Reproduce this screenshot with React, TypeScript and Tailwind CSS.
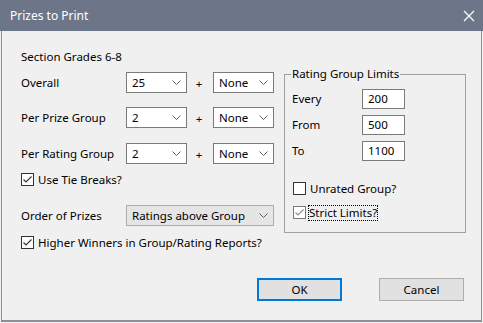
import React from "react";

const font = { fontFamily: '"Noto Sans", "DejaVu Sans", sans-serif' };

function Chevron() {
  return (
    <svg width="9" height="5" viewBox="0 0 9 5" className="shrink-0">
      <polyline points="0.5,0.5 4.5,4.5 8.5,0.5" fill="none" stroke="#606060" strokeWidth="1" />
    </svg>
  );
}

function Select({ value, w }: { value: string; w: string }) {
  return (
    <div className={`${w} h-[21px] bg-white border border-[#7a7a7a] flex items-center justify-between pl-[5px] pr-[5px] box-border`}>
      <span className="leading-none">{value}</span>
      <Chevron />
    </div>
  );
}

function Check({ checked, muted }: { checked: boolean; muted?: boolean }) {
  const c = muted ? "#8a8a8a" : "#333333";
  return (
    <div className={`w-[13px] h-[13px] bg-white border ${muted ? "border-[#7a7a7a]" : "border-[#333333]"} flex items-center justify-center box-border shrink-0`}>
      {checked && (
        <svg width="11" height="11" viewBox="0 0 11 11">
          <polyline points="1.5,5.5 4,8 9.5,2.5" fill="none" stroke={c} strokeWidth="1.1" />
        </svg>
      )}
    </div>
  );
}

function Row({ label, a }: { label: string; a: string }) {
  return (
    <div className="flex items-center h-[21px]">
      <div className="w-[105px]">{label}</div>
      <Select value={a} w="w-[61px]" />
      <div className="w-[26px] text-center pt-[3px] pr-[2px]">+</div>
      <Select value="None" w="w-[61px]" />
    </div>
  );
}

function Field({ label, value }: { label: string; value: string }) {
  return (
    <div className="flex items-center h-[20px]">
      <div className="w-[74px] pl-[4px]">{label}</div>
      <div className="w-[43px] h-[20px] bg-white border border-[#7a7a7a] flex items-center pl-[5px] box-border">{value}</div>
    </div>
  );
}

export default function App() {
  return (
    <div className="w-[483px] h-[323px] bg-[#f0f0f0] flex flex-col text-[11.5px] text-black overflow-hidden" style={font}>
      <div className="h-[31px] bg-[#6d7689] flex items-center justify-between pl-[10px] pr-[8px] text-white text-[12px] shrink-0">
        <span>Prizes to Print</span>
        <svg width="12" height="12" viewBox="0 0 12 12">
          <path d="M1 1 L11 11 M11 1 L1 11" stroke="white" strokeWidth="1.2" />
        </svg>
      </div>
      <div className="flex-1 flex flex-col border-l border-l-[#8a8f99] border-r border-r-[#8a8f99] border-b-2 border-b-[#8a8f99] ml-[1px] mr-[1px] mb-[1px]">
        <div className="flex pl-[19px]">
          <div className="flex flex-col w-[263px]">
            <div className="h-[16px] mt-[18px] leading-[16px]">Section Grades 6-8</div>
            <div className="mt-[7px]"><Row label="Overall" a="25" /></div>
            <div className="mt-[14px]"><Row label="Per Prize Group" a="2" /></div>
            <div className="mt-[15px]"><Row label="Per Rating Group" a="2" /></div>
            <div className="mt-[9px] flex items-center gap-[4px] h-[13px]">
              <Check checked />
              <span>Use Tie Breaks?</span>
            </div>
            <div className="mt-[19px] flex items-center h-[21px]">
              <div className="w-[105px]">Order of Prizes</div>
              <div className="w-[148px] h-[21px] bg-[#e5e5e5] border border-[#adadad] flex items-center justify-between pl-[5px] pr-[5px] box-border">
                <span>Ratings above Group</span>
                <Chevron />
              </div>
            </div>
            <div className="mt-[10px] flex items-center gap-[4px] h-[13px]">
              <Check checked />
              <span>Higher Winners in Group/Rating Reports?</span>
            </div>
          </div>
          <div className="relative mt-[43px] w-[182px] h-[159px] border border-[#a0a0a0] box-border flex flex-col pl-[3px]">
            <div className="absolute -top-[9px] left-[6px] bg-[#f0f0f0] px-[1px] leading-[16px]">Rating Group Limits</div>
            <div className="mt-[14px] flex flex-col gap-[6px]">
              <Field label="Every" value="200" />
              <Field label="From" value="500" />
              <Field label="To" value="1100" />
            </div>
            <div className="mt-[21px] flex items-center gap-[4px] h-[13px] pl-[5px]">
              <Check checked={false} />
              <span>Unrated Group?</span>
            </div>
            <div className="mt-[11px] flex items-center gap-[3px] h-[13px] pl-[5px]">
              <Check checked muted />
              <span className="outline outline-1 outline-dotted outline-black leading-[14px]">Strict Limits?</span>
            </div>
          </div>
        </div>
        <div className="flex mt-[29px] pl-[255px] gap-[37px]">
          <div className="w-[85px] h-[23px] bg-[#e1e1e1] border-2 border-[#0078d7] flex items-center justify-center box-border">OK</div>
          <div className="w-[85px] h-[23px] bg-[#e1e1e1] border border-[#adadad] flex items-center justify-center box-border">Cancel</div>
        </div>
      </div>
    </div>
  );
}
